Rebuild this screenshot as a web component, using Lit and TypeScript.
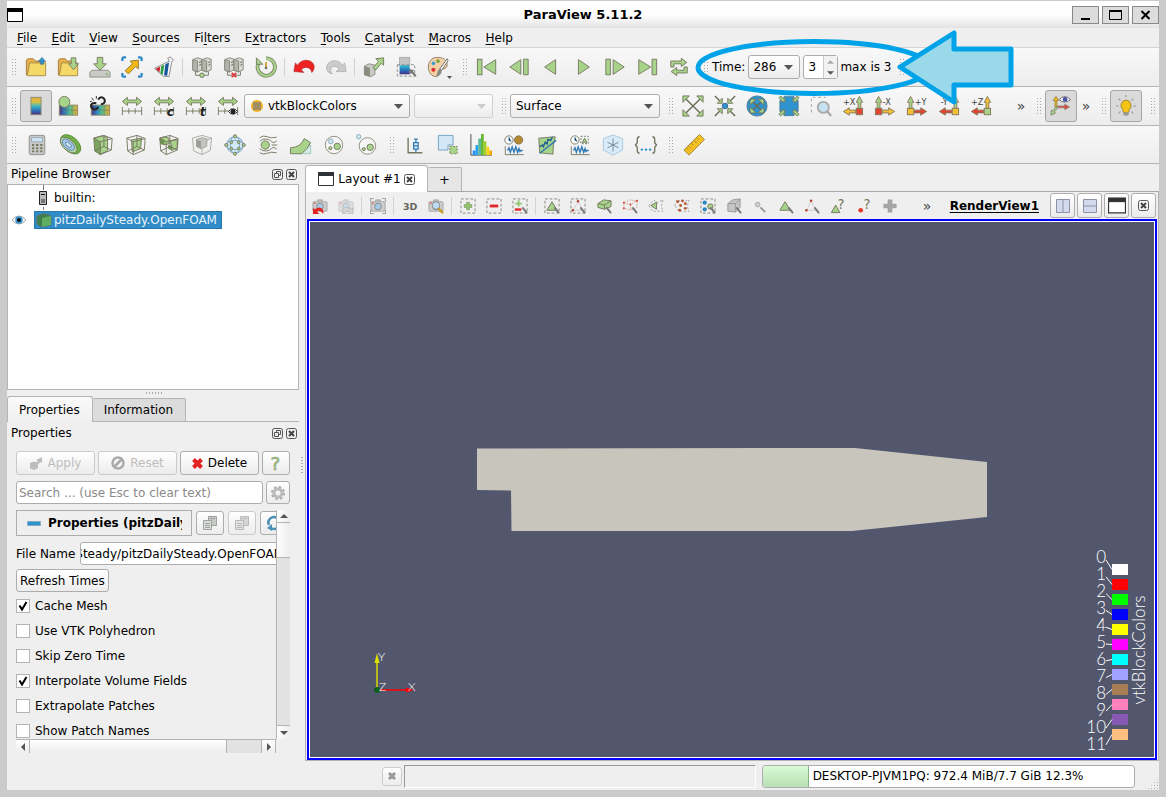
import { LitElement, html, svg, css } from "lit";
import { customElement, state } from "lit/decorators.js";

const cubeWire = svg`<path class="ol" d="M2 4.500 13 1.500 22 5 9 8.500ZM2 4.500 3 18.500 9 22.500 21 17.500 22 5M9 8.500V22.500M13 1.500V13.500L3 18.500M13 13.500 21 17.500"/>`;
const folder = svg`<path fill="#e9b04e" stroke="#a87a35" d="M1.500 21V4.500L3 3H9l2 2.500h9V9"/><path fill="#f4d968" stroke="#a58a45" d="M5 7.500H22.500V21.500H2.500Z"/>`;
const servers = svg`<g fill="#d8d8d2" stroke="#85857c"><path d="M2 4 7 2 12 3.500V15L7 17.500 2 15.500Z"/><path fill="#b5b4ac" d="M2 4 7 5.500V17.500L2 15.500Z"/><path d="M12 4 17 2 22 3.500V15L17 17.500 12 15.500Z"/><path fill="#b5b4ac" d="M12 4 17 5.500V17.500L12 15.500Z"/></g><path stroke="#555" d="M9 7l2-.7M9 10l2-.7M19 7l2-.7M19 10l2-.7"/><path class="ol" d="M5 17v4h5M19 17v4h-5"/>`;
const rangeArrow = svg`<path class="gr" d="M1.500 7 7 2.500V5.500H17V2.500L22.500 7 17 11.500V8.500H7V11.500Z"/><path class="ol" d="M1.500 13V22M22.500 13V22M1.500 17.500H22.500M8.500 14.500V20.500M15.500 14.500V20.500"/>`;
const camera = svg`<rect x="1" y="4" width="15" height="10" rx="1" fill="#cdcdcd" stroke="#a5a5a5"/><path fill="#bbb" stroke="#aaa" d="M6 4V2h5v2"/><circle cx="8.500" cy="9" r="3.500" fill="#a7cbe8" stroke="#888"/><path fill="#e33" d="M2 5h2v1H2z"/>`;
const dashBox = svg`<rect x="1" y="1" width="15" height="15" fill="none" stroke="#86877e" stroke-dasharray="3 2"/>`;
const pick = svg`<path stroke="#777" stroke-width="2" d="M11 10l5 6"/>`;
const gradient = svg`<linearGradient id="rb" x1="0" y1="0" x2="0" y2="1"><stop offset="0" stop-color="#eaa83a"/><stop offset=".28" stop-color="#d5c242"/><stop offset=".5" stop-color="#3fb8c0"/><stop offset=".75" stop-color="#2c74b8"/><stop offset="1" stop-color="#512a83"/></linearGradient><linearGradient id="rh"><stop offset="0" stop-color="#512a83"/><stop offset=".3" stop-color="#2b80c0"/><stop offset=".6" stop-color="#58bf8e"/><stop offset="1" stop-color="#f0a830"/></linearGradient><linearGradient id="rc" x1="0" y1="0" x2="0" y2="1"><stop offset="0" stop-color="#3fc0d0"/><stop offset=".5" stop-color="#2478c0"/><stop offset="1" stop-color="#45307f"/></linearGradient>`;
const viewArrows = (up: string, side: string, box: string, flip: boolean, label: string, mid = false) => svg`
  <g transform=${flip ? "translate(24 0) scale(-1 1)" : ""}>
    <path fill=${up} stroke="#85765a" d="M3.500 15V8H1.500L5 1.500 8.500 8H6.500V15Z"/>
    <path fill=${side} stroke="#85765a" d="M9 16.500H16V14L22.500 18 16 22V19.500H9Z"/>
    <rect x="1.500" y="14.500" width="7" height="7" fill=${box} stroke="#85765a"/>
  </g>
  <text x=${flip ? (mid ? 3 : 1) : 9.500} y="11" class="axis">${label}</text>`;
const thinOut = svg`<path stroke="#686b52" stroke-width="1.500" d="M4 4 20 20M20 4 4 20"/><g class="gr"><path d="M1 1H8L1 8ZM23 1V8L16 1ZM1 23V16L8 23ZM23 23H16L23 16Z"/></g>`;
const discOut = svg`<path stroke="#686b52" stroke-width="1.500" d="M7 7 17 17M17 7 7 17"/><g class="gr"><path d="M4.500 4.500H11L4.500 11ZM19.500 4.500V11L13 4.500ZM4.500 19.500V13L11 19.500ZM19.500 19.500H13L19.500 13Z"/></g>`;
const inArrows = svg`<path stroke="#686b52" stroke-width="1.500" d="M1 1 7 7M23 1 17 7M1 23 7 17M23 23 17 17"/><g class="gr"><path d="M9 3.500V9H3.500ZM15 3.500V9H20.500ZM9 20.500V15H3.500ZM15 20.500V15H20.500Z"/></g>`;
const wave = svg`<path stroke="#2e79b5" stroke-width="1.500" fill="none" d="M5 18l1.500-3 1.500 5 2-6 2 6 2-6 2 6 1.500-4 1 3 1-1h2"/><path class="ol" d="M2.500 13.500V22.500H22.500"/>`;
const clock = svg`<circle cx="6.500" cy="6.500" r="4.500" fill="#fff" stroke="#75775f"/><path stroke="#2e79b5" d="M6.500 3.500V7L9 8"/>`;

const icons: Record<string, unknown> = {
  open: svg`${folder}<path fill="#2f93cf" stroke="#35678c" stroke-width=".7" d="M17 9V6H14.500L18.500 1.500 22.500 6H20V9Z"/>`,
  load: svg`${folder}<path class="gr" d="M15.500 2H20.500V8.500H23.500L18 15 12.500 8.500H15.500Z"/>`,
  save: svg`<path class="gy" d="M3 15.500H21L23 18V23H1V18Z"/><circle cx="19.500" cy="20" r="1.200" fill="#7fb75a"/><path class="gr" d="M9 1.500H15V8.500H19L12 15.500 5 8.500H9Z"/>`,
  extract: svg`<g fill="none" stroke="#2f8ac6" stroke-width="2.500"><path d="M1.500 5.500V3Q1.500 1.500 3 1.500H5.500M18.500 1.500H21Q22.500 1.500 22.500 3V5.500M1.500 18.500V21Q1.500 22.500 3 22.500H5.500M18.500 22.500H21Q22.500 22.500 22.500 21V18.500"/></g><path fill="#f3b817" stroke="#8c7636" d="M19 4.500V14L16 11.500 8 19.500 4.500 16 12.500 8.500 10 5.500Z"/>`,
  catalyst: svg`<path fill="#f5f5f5" stroke="#888" d="M1.500 13.500 18 5.500 16 2.500 19 1 22.500 4.500 20.500 6 17.500 22.500 11 22Z"/><path fill="#cc2030" d="M3 14 8 11.500 7 18Z"/><path fill="#2b9c47" d="M9 11 12.500 9.500 10.500 20.500 8 19Z"/><path fill="#15559c" d="M13.500 9 17.500 7 15.500 21.500 12 21Z"/>`,
  connect: svg`${servers}<circle class="gr" cx="12" cy="21" r="2.500"/>`,
  disconnect: svg`${servers}<path stroke="#d83a3a" stroke-width="2" d="M9.500 18.500 14.500 23M14.500 18.500 9.500 23"/>`,
  history: svg`<path fill="none" stroke="#75775f" stroke-width="4" d="M4.500 6.500A9.500 9.500 0 1 0 12 2.500"/><path fill="none" stroke="#a7d38a" stroke-width="2.400" d="M4.500 6.500A9.500 9.500 0 1 0 12 2.500"/><path class="gr" d="M1.500 2V9H8.500Z"/><path stroke="#d6a02c" stroke-width="2" d="M12 6.500V14"/><circle cx="12" cy="13" r="1.500" fill="#777"/>`,
  undo: svg`<path fill="#ee2222" stroke="#a52525" stroke-width=".6" d="M1 17 2.500 7.500 5 10C9 3 19 3 22.500 9c1.500 4 0 7-2 9-.500-5-7-8-11.500-3L12 18Z"/>`,
  redo: svg`<path fill="#cbcbcb" stroke="#aaa" stroke-width=".8" d="M23 17 21.500 7.500 19 10C15 4 7 3.500 3 8.500c-3 5-1 10 5 11-4-5-1-10 5-7.500L15.500 14 12 17Z"/>`,
  loadstate: svg`<path class="gy" d="M1.500 11 7 8.500 13 10V20L8 22.500 1.500 20.500Z"/><path fill="#8b8b80" d="M1.500 11 7.500 13V22.500L1.500 20.500Z"/><path class="gr" d="M22.500 2V10L20 8 13.500 15.500 11 12.500 17 6 14 3Z"/>`,
  colorby: svg`${gradient}<rect x="5" y="1.500" width="11" height="9" fill="#c4c4c4" stroke="#aaa"/><rect x="5" y="10" width="11" height="10" fill="url(#rc)"/><rect x="2.500" y="9.500" width="19" height="12.500" fill="none" stroke="#888" stroke-dasharray="3 2"/><path fill="#777" d="M15 14 21 15.500 19.500 17 23.500 21 22 22.500 18 18.500 16.500 20Z"/>`,
  palette: svg`<path fill="#f3d1a4" stroke="#8e7d66" d="M11 1.500C5 1.500 1.500 6 1.500 12S5 22.500 10 22.500c4 0 1-5 3-7s9 0 9-6-5-8-11-8Z"/><circle cx="7" cy="8" r="2" fill="#3b9bd4"/><circle cx="12" cy="5.500" r="2" fill="#76a63c"/><circle cx="7" cy="15" r="2.200" fill="#e02e2e"/><path fill="#fff" stroke="#666" d="M22 3 14 14l2 1.500L23 5Z"/><path fill="#888" d="M14 14c-3 2-2 5-4 8 4 0 6-3 6-6Z"/>`,
  first: svg`<rect class="gr" x="1.500" y="3.500" width="5" height="17"/><path class="gr" d="M21.500 4V20L8.500 12Z"/>`,
  prev: svg`<path class="gr" d="M14 4V20L2 12ZM17 3.500h5V20.500H17Z"/>`,
  back: svg`<path class="gr" d="M17 4V20L5 12Z"/>`,
  play: svg`<path class="gr" d="M7 4V20L19 12Z"/>`,
  next: svg`<path class="gr" d="M2 3.500H7V20.500H2ZM10 4V20L22 12Z"/>`,
  last: svg`<path class="gr" d="M3 4V20L16 12ZM17.500 3.500h5V20.500H17.500Z"/>`,
  loop: svg`<path class="gr" d="M3 12V5.500H14.500V2.500L20.500 7 14.500 11.500V8.500H6.500V12ZM21 12V18.500H9.500V21.500L3.500 17 9.500 12.500V15.500H17.500V12Z"/>`,
  colorbar: svg`${gradient}<rect x="6.500" y="2.500" width="11" height="19" fill="url(#rb)" stroke="#8a8a7a"/>`,
  editmap: svg`${gradient}<rect x="2.500" y="11" width="20" height="11" fill="url(#rh)" stroke="#8a8a6a"/><path stroke="#6b6b4c" stroke-width=".5" d="M3 16.500H23M10 11V22M16.500 11V22"/><circle cx="8" cy="7.500" r="6" class="gr"/>`,
  sepmap: svg`${gradient}<rect x="2.500" y="11" width="20" height="11" fill="url(#rh)" stroke="#8a8a6a"/><path stroke="#6b6b4c" stroke-width=".5" d="M3 16.500H23M16.500 11V22"/><g fill="none" stroke="#222" stroke-width="2.200"><path d="M10 5c2-4 6-3 7 0s-1 5-4 5M8 9c-5-1-7 2-5 5s6 2 7-1"/></g><path stroke="#222" d="M3 3l2 3M8 1v3M1 7h2"/>`,
  range: rangeArrow,
  rangec: svg`${rangeArrow}<text x="15" y="22.500" class="glyph">c</text>`,
  ranget: svg`${rangeArrow}<text x="16" y="22.500" class="glyph">t</text>`,
  rangeeye: svg`${rangeArrow}<path fill="#fff" stroke="#222" d="M12.500 18q5-6 10 0-5 6-10 0Z"/><circle cx="17.500" cy="18" r="2.800" fill="#222"/>`,
  resetview: thinOut,
  zoomcenter: svg`${inArrows}<circle cx="12" cy="12" r="3" fill="#2e93cf" stroke="#35678c"/>`,
  zoomdata: svg`<circle cx="12" cy="12" r="11" fill="#2e93cf" stroke="#4b7690"/>${discOut}`,
  zoomclose: svg`<path fill="#2e93cf" stroke="#4b7690" stroke-width=".8" d="M6.500 1.500H17.500Q17 5.500 22 6V18Q17.500 18.500 17.500 22.500H6.500Q6.500 18.500 2 18V6Q6.500 5.500 6.500 1.500Z"/><g class="gr"><path d="M7.500 3V7.500H3L4.200 6 1 3 3 1 6 4.200ZM16.500 3V7.500H21L19.800 6 23 3 21 1 18 4.200ZM7.500 21V16.500H3L4.200 18 1 21 3 23 6 19.800ZM16.500 21V16.500H21L19.800 18 23 21 21 23 18 19.800Z"/></g>`,
  zoombox: svg`<path fill="none" stroke="#999" stroke-dasharray="3 3" d="M1.500 19V2.500H17"/><circle cx="14.500" cy="13.500" r="6" fill="#c6e2f3" stroke="#aaa" stroke-width="2"/><path stroke="#aaa" stroke-width="2.500" d="M19 18l4 5"/>`,
  px: viewArrows("#a7d38a", "#f3c033", "#e24432", true, "+X"),
  mx: viewArrows("#a7d38a", "#f3c033", "#e24432", false, "-X"),
  py: viewArrows("#a7d38a", "#e24432", "#f3c033", false, "+Y"),
  my: viewArrows("#a7d38a", "#e24432", "#f3c033", true, "-Y", true),
  pz: viewArrows("#f3c033", "#e24432", "#a7d38a", true, "+Z"),
  axes: svg`<path fill="#f3b817" stroke="#8c7636" stroke-width=".8" d="M5.500 13V6H3.500L6.500 1.500 9.500 6H7.500V13Z"/><path fill="#e24432" stroke="#888" stroke-width=".8" d="M8 12H16V10L21.500 13 16 16V14H8Z"/><path class="gr" stroke-width=".8" d="M6.500 12.500 3 17.500 1.500 16.500 1 22 6 19.500 4.500 18.500 8.500 14Z"/><path fill="#fff" stroke="#666" d="M10 5q6-6.500 12.500 0-6.500 5.500-12.500 0Z"/><circle cx="16.500" cy="4.800" r="2.600" fill="#4a53a5"/>`,
  light: svg`<g stroke="#999" stroke-width="1.200"><path d="M12 0V2.500M1 12H4M20 12h3M4 4l2 2M20 4l-2 2M4 20l2-2M20 20l-2-2"/></g><path fill="#f3c316" stroke="#9b8436" d="M12 5.500a6 6 0 0 0-3.500 10.500l.500 3h6l.500-3A6 6 0 0 0 12 5.500Z"/><path fill="#999" d="M9 19h6v2l-1.500 1.500h-3L9 21Z"/>`,
  calc: svg`<rect x="3.500" y="1.500" width="17" height="21" rx="2" fill="#c9c9c9" stroke="#8b8b86"/><rect x="6" y="4" width="12" height="4.500" fill="#cfe4f3" stroke="#9ab"/><g fill="#77775f"><path d="M6.500 11h2.500v2h-2.500zM11 11h2.500v2h-2.500zM15.500 11h2.500v2h-2.500zM6.500 14.500h2.500v2h-2.500zM11 14.500h2.500v2h-2.500zM15.500 14.500h2.500v2h-2.500zM6.500 18h2.500v2h-2.500zM11 18h2.500v2h-2.500zM15.500 18h2.500v2h-2.500z"/></g>`,
  contour: svg`<g transform="rotate(42 12 12)"><ellipse cx="12" cy="11" rx="13" ry="8" fill="#6fb244" stroke="#5a8a3d"/><ellipse cx="11" cy="13" rx="11" ry="6" fill="#b7dba0" stroke="#75775f"/><ellipse cx="10.500" cy="13" rx="8" ry="4.300" fill="#a4c9e8" stroke="#5d84a5"/><ellipse cx="10.500" cy="13" rx="4" ry="2" fill="#cfe4f3" stroke="#5d84a5"/></g>`,
  clip: svg`<path class="gr" d="M2 4.500 11 2 17 4V18.500L9 22Z"/><path fill="#7da35f" d="M2 4.500 9 8.500V22.500L3 18.500Z"/>${cubeWire}`,
  slice: svg`<path class="gr" d="M7 6.500 18 4.500 17 16 8 19.500Z"/>${cubeWire}`,
  threshold: svg`<path class="gr" d="M2 4.500 7 3 12 4.500V10.500L8 12 3 10.500ZM13 8 21 6V15L15 18V13Z"/><path fill="#6a9650" d="M2 4.500 7 6.500V12L3 10.500ZM11 12l4 1v5l-4-2Z"/>${cubeWire}`,
  subset: svg`<path fill="#efefef" stroke="#a8a8a4" d="M1.500 4.500 12 1.500 22.500 4.500 21 18 12 22.500 3 18.500Z"/><path fill="#c4c4c0" stroke="#a0a09b" d="M6 6 12 4 17.500 5.500 17 13.500 11 16 6 13.500Z"/><path fill="#9c9c98" d="M6 6 11 8V16L6 13.500Z"/><path fill="none" stroke="#a8a8a4" d="M12 16V22.500M22.500 4.500 17 7"/>`,
  glyph: svg`<circle cx="12" cy="12" r="9" fill="#d3e8f6" stroke="#6f9fbe"/><path fill="none" stroke="#7ba5c0" d="M3.500 9Q12 5 20.500 9M3.500 15Q12 19 20.500 15M9 3.500Q5 12 9 20.500M15 3.500Q19 12 15 20.500"/><g class="gr"><circle cx="12" cy="2.500" r="1.700"/><circle cx="12" cy="21.500" r="1.700"/><circle cx="2.500" cy="12" r="1.700"/><circle cx="21.500" cy="12" r="1.700"/><circle cx="8" cy="9" r="1.500"/><circle cx="16" cy="9" r="1.500"/><circle cx="8" cy="16" r="1.500"/><circle cx="16" cy="16" r="1.500"/></g>`,
  stream: svg`<path class="ol" d="M3 4Q7 1 11 3T21.500 3.500M3 8Q6 5 10 5.500T16 8.500 21.500 7.500M16 12H22M3 16Q6 19 10 18.500T16 15.500 21.500 16.500M3 20.500Q7 23 11 21T21.500 20.500"/><circle class="gr" cx="9" cy="12" r="4.500"/>`,
  warp: svg`<path fill="#d3ece8" stroke="#9fc5be" d="M9 21.500 22.500 12V21.500Z"/><path class="gr" d="M.5 15Q12 14.500 15.500 5L22.500 9.500Q19 17 12.500 21.500H.5Z"/>`,
  group: svg`<circle cx="12" cy="12" r="9.500" fill="#f6f6f6" stroke="#8a8b78"/><circle cx="8.500" cy="8" r="2.600" fill="#cfe8ec" stroke="#8ab"/><circle class="gr" cx="15.500" cy="13.500" r="3.500"/><circle class="gr" cx="8" cy="15.500" r="1.700"/>`,
  extractgroup: svg`<circle cx="12.500" cy="13" r="9" fill="#f6f6f6" stroke="#8a8b78"/><circle cx="3" cy="3" r="2.400" fill="#cfe8ec" stroke="#8ab"/><circle class="gr" cx="15.500" cy="14.500" r="3.500"/><circle class="gr" cx="8.500" cy="16.500" r="1.700"/>`,
  box: svg`<path class="ol" stroke-width="1.500" d="M4.500 4V20.500H20"/><path stroke="#2e79b5" stroke-width="1.300" fill="#dcebf6" d="M10.500 9.500h5v7h-5zM13 5.500v4M13 16.500v3M11 5.500h4M10.500 13h5"/>`,
  selectdata: svg`<path fill="#d3e8f6" stroke="#6f9fbe" d="M1.500 1.500H17.500V12H12V17.500H1.500Z"/><rect x="14" y="13.500" width="8" height="8" fill="#a7d38a" stroke="#75775f" stroke-dasharray="2 1.500"/>`,
  histogram: svg`<path stroke="#444" fill="none" d="M1 0V23H24"/><path fill="#1e8fff" d="M3 18h3v5H3z"/><path fill="#2aa3f0" d="M6 12h3v11H6z"/><path fill="#58b8a0" d="M9 5h3v18H9z"/><path fill="#66b82c" d="M12 0h3v23h-3z"/><path fill="#a4cc30" d="M15 8h3v15h-3z"/><path fill="#f6d50e" d="M18 14h3v9h-3z"/><path fill="#f9a812" d="M21 18h3v5h-3z"/>`,
  plottime: svg`${clock}<circle cx="17" cy="6.500" r="4.500" fill="#b4892f" stroke="#81754e"/>${wave}`,
  plotline: svg`<path class="gr" d="M3 4.500 21 3 19 12 18.500 22 4 20.500Z"/><path stroke="#2e79b5" stroke-width="1.500" d="M4 21 22 7"/><path stroke="#1f5d90" fill="none" stroke-width="1.500" d="M4 14l3-2 1 2 2-5 2 2 1-5 3 1 2-4"/>`,
  plotsel: svg`${clock}<rect x="13" y="2.500" width="8" height="8" fill="none" stroke="#75775f" stroke-dasharray="2 1.500"/><path class="gr" d="M17 4.500 19.500 9H14.500Z"/>${wave}`,
  probe: svg`<path fill="#d9ebf8" stroke="#a9c6db" d="M12 1 22.500 5V17.500L12 23 1.500 17.500V5Z"/><path stroke="#6d8494" d="M12 5V19M6 9 18 15M18 9 6 15"/>`,
  programmable: svg`<g fill="none" stroke="#75775f" stroke-width="1.500"><path d="M5 3Q2.500 3 2.500 6V9.500L.5 12l2 2.500V18q0 3 2.500 3M19 3q2.500 0 2.500 3V9.500l2 2.500-2 2.500V18q0 3-2.500 3"/></g><g fill="#2e8fc7"><circle cx="7.500" cy="17" r="1.300"/><circle cx="12" cy="17" r="1.300"/><circle cx="16.500" cy="17" r="1.300"/></g>`,
  ruler: svg`<path fill="#f4c022" stroke="#a08234" d="M18 .5 23.500 6 6.500 23 1 17.500Z"/><path stroke="#a08234" d="M15 4l2 2M12 7l3 3M9 10l2 2M6 13l3 3M4 15.500l2 2"/>`,
  help: svg`<text x="6" y="20" font-size="20" fill="#a7d38a" stroke="#8a9a74" stroke-width=".7">?</text>`,
};

const viewIcons: Record<string, unknown> = {
  camundo: svg`${camera}<path fill="#e32222" d="M1 17V10.500L3 12Q9 8 12 13v4Q8 12 5.500 14.500L8 17Z"/>`,
  camredo: svg`<g opacity=".5">${camera}</g><path fill="#d5d5d5" stroke="#aaa" stroke-width=".6" d="M16 17V10.500L14 12Q8 8 5 12v5h3Q7 13 12 14.500L10 17Z"/>`,
  capture: svg`${camera}<path fill="none" stroke="#999" d="M.5 4V.5H4M13 .5h3.500V4M.5 13v3.500H4M13 16.500h3.500V13"/>`,
  threed: svg`<text x="1" y="13" font-size="10" font-weight="700" fill="#66665a">3D</text>`,
  camzoom: svg`${camera}<circle cx="8.500" cy="8" r="4" fill="#bedcf2" stroke="#888"/><path stroke="#c79a28" stroke-width="2.500" d="M11 11l5 5"/>`,
  add: svg`${dashBox}<path fill="#93c66e" stroke="#6c8b52" stroke-width=".6" d="M7 4.500h3V7h2.500v3H10v2.500H7V10H4.500V7H7Z"/>`,
  sub: svg`${dashBox}<path fill="#e02626" d="M4 7h9v3H4z"/>`,
  toggle: svg`${dashBox}<path fill="#93c66e" d="M6 2.500h2V5h2.500v2H8v2H6V7H3.500V5H6Z"/><path fill="#e02626" d="M3 11h7v2.500H3z"/>${pick}`,
  cells: svg`${dashBox}<path class="gr" d="M8.500 4 14 13H3Z"/>${pick}`,
  points: svg`${dashBox}<path fill="none" stroke="#ccc" d="M8.500 4 14 13H3Z"/><g fill="#b5432e"><circle cx="8.500" cy="3.500" r="1.300"/><circle cx="3" cy="13" r="1.300"/></g>${pick}`,
  frcells: svg`<path class="gr" d="M2 6 8 2 16 3V9L9 12 2 10Z"/><path class="ol" d="M2 6 9 7.500 16 3M9 7.500V12"/>${pick}`,
  frpoints: svg`<path fill="none" stroke="#d8a59c" stroke-dasharray="2 1" d="M2 5 8 2 16 3V10L9 13 2 11ZM2 5 9 7 16 3M9 7v6"/><g fill="#cf4a3a"><circle cx="2" cy="5" r="1.100"/><circle cx="9" cy="7" r="1.100"/><circle cx="16" cy="3" r="1.100"/><circle cx="2" cy="11" r="1.100"/></g>${pick}`,
  polycells: svg`<path fill="none" stroke="#999" stroke-dasharray="2 2" d="M1 8 6 2 10 5 16 2 14 9 16 14H5Z"/><path class="gr" d="M9 4.500V12L3 8Z"/>`,
  polypoints: svg`<path fill="none" stroke="#999" stroke-dasharray="2 2" d="M1 8 3 2 10 4 16 2 14 9 16 14H5Z"/><g fill="#b5532e"><circle cx="4" cy="4" r="1.500"/><circle cx="9" cy="3" r="1.500"/><circle cx="7" cy="8" r="1.500"/><circle cx="12" cy="6" r="1.500"/><circle cx="12" cy="11" r="1.500"/><circle cx="6" cy="13" r="1.500"/></g>`,
  blocks: svg`${dashBox}<circle cx="5" cy="5" r="2.300" fill="#2e86c1"/><circle cx="5" cy="12" r="2.300" fill="#2e86c1"/><circle class="gr" cx="11" cy="9" r="2.800"/>${pick}`,
  frblocks: svg`<path fill="#c6c6c6" stroke="#999" d="M2 6 7 2 15 1V10L10 15 2 14Z"/><path fill="none" stroke="#999" d="M2 6H10L15 1M10 6V15"/>${pick}`,
  hover: svg`<circle cx="6" cy="7" r="2.500" fill="#ccc" stroke="#aaa"/><path stroke="#999" stroke-width="2" d="M9 10l5 5"/>`,
  icells: svg`<path class="gr" d="M7.500 4 13 13H2Z"/>${pick}`,
  ipoints: svg`<path fill="none" stroke="#ccc" d="M7.500 3 13 13H3Z"/><g fill="#b5432e"><circle cx="7.500" cy="3" r="1.400"/><circle cx="2.500" cy="13" r="1.400"/></g>${pick}`,
  hcells: svg`<path class="gr" d="M6 7.500 10.500 15.500H1.500Z"/><text x="8" y="12" class="q">?</text>`,
  hpoints: svg`<circle cx="5" cy="13" r="2.500" fill="#e23a26"/><text x="8" y="12" class="q">?</text>`,
  grow: svg`<path fill="#a4a4a4" d="M6 1.500h5V6h4.500v5H11v4.500H6V11H1.500V6H6Z"/>`,
};

const icon = (name: string) => html`<svg class="icon" viewBox="0 0 24 24" aria-hidden="true">${icons[name]}</svg>`;
const viewIcon = (name: string) => html`<svg class="vicon" viewBox="0 0 17 17" aria-hidden="true">${viewIcons[name]}</svg>`;
const caret = html`<svg class="caret" viewBox="0 0 9 5" aria-hidden="true"><path fill="currentColor" d="M0 0h9L4.500 5Z"/></svg>`;
const windowIcon = html`<svg class="win" viewBox="0 0 16 14" aria-hidden="true"><path fill="#fff" stroke="currentColor" d="M.5.5h15v13H.5z"/><path fill="currentColor" d="M0 0h16v4H0z"/></svg>`;
const closeBox = html`<svg class="mini" viewBox="0 0 11 11" aria-hidden="true"><rect x=".5" y=".5" width="10" height="10" rx="2" fill="none" stroke="#555"/><path stroke="#444" stroke-width="2" d="M3 3l5 5M8 3 3 8"/></svg>`;
const floatBox = html`<svg class="mini" viewBox="0 0 11 11" aria-hidden="true"><rect x=".5" y=".5" width="10" height="10" rx="2" fill="none" stroke="#555"/><path fill="none" stroke="#555" d="M4.500 4.500V2.500h4v4h-2M2.500 4.500h4v4h-4z"/></svg>`;

const menus: [string, number][] = [["File", 0], ["Edit", 0], ["View", 0], ["Sources", 0], ["Filters", 2], ["Extractors", 1], ["Tools", 0], ["Catalyst", 0], ["Macros", 0], ["Help", 0]];

const blocks = ["#ffffff", "#ff0000", "#00ff00", "#0000ff", "#ffff00", "#ff00ff", "#00ffff", "#a1a1ff", "#a97d53", "#ff80bc", "#8759b5", "#ffbf80"];

@customElement("app-root")
export class AppRoot extends LitElement {
  @state() private options = [
    { id: "cache", label: "Cache Mesh", on: true },
    { id: "poly", label: "Use VTK Polyhedron", on: false },
    { id: "skip", label: "Skip Zero Time", on: false },
    { id: "interp", label: "Interpolate Volume Fields", on: true },
    { id: "extrap", label: "Extrapolate Patches", on: false },
    { id: "names", label: "Show Patch Names", on: false },
  ];

  static styles = css`
    :host { display: block; font: 12px/16px "DejaVu Sans", sans-serif; color: #000; }
    * { box-sizing: border-box; }
    button, input, select { font: inherit; color: inherit; margin: 0; padding: 0; }
    button { background: none; border: 0; display: flex; align-items: center; justify-content: center; white-space: nowrap; }
    svg { display: block; flex: none; }
    .window { position: relative; min-height: 100vh; display: grid; grid-template-rows: 28px 20px 39px 39px 38px 1fr 28px; border: solid #cbcbcb; border-width: 0 7px 7px; background: #efefef; overflow: hidden; }
    .titlebar { margin: 0 -7px; padding: 0 7px; display: grid; grid-template-columns: 1fr auto 1fr; align-items: center; background: linear-gradient(#fff 50%, #e3e3e3); border-top: 1px solid #ccc; border-radius: 5px 5px 0 0; }
    .title { font-size: 13px; font-weight: 700; }
    .win { width: 16px; height: 14px; }
    .winbuttons { display: flex; gap: 3px; justify-content: flex-end; }
    .winbuttons button { width: 27px; height: 18px; background: #dcdcdc; border: 1px solid #888; }
    .menubar { padding: 0 3px; border-bottom: 1px solid #d4d4d4; }
    .menus { display: flex; max-width: 510px; justify-content: space-between; }
    .menubar button { padding: 0 7px; height: 19px; }
    u { text-underline-offset: 2px; }
    .toolbar { display: flex; align-items: center; border-bottom: 1px solid #b4b4b4; background: linear-gradient(#f8f8f8, #ededed); white-space: nowrap; min-width: 0; }
    .handle { width: 5px; height: 18px; margin: 0 4px; flex: none; background: radial-gradient(circle, #aaa 0.7px, transparent 1px) 0 0 / 3px 3px; }
    .tool { width: 32px; height: 32px; flex: none; }
    .wide .tool { width: 33px; }
    .icon { width: 22px; height: 22px; overflow: visible; }
    .on { background: #dadada; border: 1px solid #a6a6a6; border-radius: 3px; }
    .sep { width: 1px; height: 18px; margin: 0 3px 0 2px; background: #d2d2d2; flex: none; }
    .more { width: 18px; font-size: 14px; color: #444; flex: none; }
    .gr { fill: #a7d38a; stroke: #75775f; }
    .ol { fill: none; stroke: #75775f; }
    .gy { fill: #c9c9c6; stroke: #8c8c86; }
    .glyph { font: italic 700 13px "DejaVu Sans", sans-serif; fill: #222; }
    .axis { font-size: 9px; fill: #444; }
    .q { font-size: 14px; fill: #75775f; }
    .combo { display: flex; align-items: center; height: 24px; padding: 0 6px 0 5px; border: 1px solid #adadad; border-radius: 3px; background: linear-gradient(#fff, #ececec); flex: none; }
    .combo select { appearance: none; background: none; border: 0; outline: 0; flex: 1; min-width: 0; height: 22px; }
    .combo .dot { width: 12px; height: 12px; margin: 0 5px 0 2px; }
    .caret { width: 9px; height: 5px; color: #555; }
    .faded { border-color: #cfcfcf; color: #ccc; }
    .faded .caret { color: #ccc; }
    .w-array { width: 166px; } .w-comp { width: 79px; margin: 0 4px; } .w-rep { width: 150px; } .w-time { width: 52px; margin: 0 3px; }
    .w-time, .w-array { padding-left: 4px; }
    .spin { display: flex; width: 35px; height: 24px; border: 1px solid #adadad; border-radius: 3px; background: #fff; margin-right: 2px; }
    .spin input { appearance: textfield; border: 0; outline: 0; width: 19px; padding-left: 4px; background: none; }
    .spin input::-webkit-inner-spin-button { display: none; }
    .steps { flex: 1; display: grid; border-left: 1px solid #ccc; background: #f2f2f2; }
    .steps svg { width: 7px; height: 4px; }
    .palette { position: relative; }
    .palette .caret { position: absolute; right: 2px; bottom: 4px; width: 5px; height: 3px; }
    .gap-m { width: 4px; flex: none; }
    .gap-s { width: 2px; flex: none; }
    .body { display: grid; grid-template-columns: 292px 6px minmax(0, 1fr); min-height: 0; }
    .dock { display: grid; grid-template-rows: 20px 206px 6px 26px 22px minmax(0, 1fr); min-width: 0; }
    .docktitle { display: flex; align-items: center; gap: 3px; padding: 0 2px 0 4px; }
    .docktitle span { flex: 1; }
    .mini { width: 11px; height: 11px; }
    .tree { margin: 0; padding: 0; list-style: none; background: #fff; border: 1px solid #b4b4b4; }
    .tree li { display: flex; align-items: center; height: 22px; }
    .tree .server { height: 25px; padding-left: 30px; gap: 4px; }
    .tree .source { padding-left: 3px; height: 20px; gap: 7px; }
    .picked { display: flex; align-items: center; gap: 2px; height: 18px; padding: 0 4px 0 1px; background: #308cc6; border: 1px solid #2878ad; color: #eaf3fa; }
    .split { display: grid; place-items: center; }
    .split i { width: 17px; height: 2px; background: radial-gradient(circle, #aaa 0.7px, transparent 1px) 0 0 / 3px 2px; }
    .vsplit { display: grid; align-content: start; justify-items: center; padding-top: 292px; }
    .vsplit i { width: 2px; height: 17px; background: radial-gradient(circle, #aaa 0.7px, transparent 1px) 0 0 / 2px 3px; }
    .tabs { display: flex; align-items: flex-end; border-bottom: 1px solid #b4b4b4; }
    .tabs button { border: 1px solid #b4b4b4; border-bottom: 0; height: 23px; background: #dcdcdc; padding: 0 12px 0 11px; border-radius: 2px 2px 0 0; border-left: 0; }
    .tabs .current { height: 26px; background: linear-gradient(#fafafa, #efefef); border-left: 1px solid #b4b4b4; margin-bottom: -1px; border-radius: 3px 3px 0 0; }
    .props { display: grid; grid-template-rows: 24px 23px minmax(0, 1fr); gap: 6px; padding: 7px 9px 8px; min-height: 0; }
    .row { display: flex; gap: 3px; }
    .push { border: 1px solid #adadad; border-radius: 3px; background: linear-gradient(#fff, #ececec); gap: 5px; }
    .push:disabled { border-color: #cacaca; color: #bebebe; }
    .row .push { flex: 1 1 0; }
    .row .square { flex: 0 0 28px; }
    .row .gear { flex: 0 0 24px; }
    .field { border: 1px solid #adadad; border-radius: 3px; background: #fff; outline: 0; height: 23px; }
    .search { flex: 1; min-width: 0; padding: 0 2px; }
    .search::placeholder { color: #8a8a8a; }
    .scroll { display: grid; grid-template-columns: minmax(0, 1fr) 14px; grid-template-rows: minmax(0, 1fr) 14px; min-height: 0; height: 243px; }
    .content { overflow: hidden; min-width: 0; }
    .inner { width: 340px; }
    .grouprow { display: flex; gap: 4px; align-items: center; margin-bottom: 6px; }
    .group { width: 176px; height: 26px; border: 1px solid #adadad; display: flex; align-items: center; padding: 0 9px 0 10px; gap: 7px; margin: 0; font-size: 12px; }
    .group span { overflow: hidden; white-space: nowrap; font-weight: 700; }
    .grouprow .push { width: 28px; height: 24px; }
    .filerow { display: flex; align-items: center; gap: 5px; margin-bottom: 4px; }
    .file { width: 255px; text-indent: -6px; }
    .refresh { height: 23px; padding: 0 3px; margin-bottom: 1px; }
    .check { display: flex; align-items: center; gap: 5px; height: 25px; }
    .check input { appearance: none; width: 14px; height: 14px; border: 1px solid #b4b4b4; background: #fff; }
    .check input:checked { background: #fff url("data:image/svg+xml,%3Csvg xmlns='http://www.w3.org/2000/svg' viewBox='0 0 12 12'%3E%3Cpath d='M2.500 5.500 5 9.500 9.500 2' fill='none' stroke='black' stroke-width='2'/%3E%3C/svg%3E"); }
    .vbar { display: grid; grid-template-rows: 13px 35px 1fr 14px; border-left: 1px solid #b4b4b4; background: #e2e2e2; }
    .hbar { display: grid; grid-template-columns: 14px 1fr 34px 14px; border-top: 1px solid #b4b4b4; border-right: 1px solid #b4b4b4; background: #e2e2e2; }
    .vbar > *, .hbar > * { display: grid; place-items: center; color: #555; }
    .vbar .thumb, .vbar button { background: linear-gradient(90deg, #fff, #ececec); border-bottom: 1px solid #b4b4b4; }
    .vbar .down { border-bottom: 0; border-top: 1px solid #b4b4b4; }
    .hbar .thumb, .hbar button { background: linear-gradient(#fff, #ececec); border-right: 1px solid #b4b4b4; }
    .hbar .right { border-right: 0; border-left: 1px solid #b4b4b4; }
    .tri { width: 8px; height: 8px; }
    .main { display: grid; grid-template-rows: 28px minmax(0, 1fr); padding-bottom: 1px; min-width: 0; }
    .main .tabs { border-color: #a8a8a8; }
    .main .current { height: 27px; width: 123px; padding: 0; gap: 3px; background: #fff; }
    .main .current .win { margin: 0 1px 0 0; color: #2f3237; }
    .main .plus { width: 34px; height: 24px; padding: 0; font-size: 13px; background: #e6e6e6; }
    .frame { display: grid; grid-template-rows: 27px minmax(0, 1fr); border: 1px solid #b4b4b4; border-top: 0; padding: 0 1px; min-height: 0; }
    .viewbar { display: flex; align-items: center; min-width: 0; }
    .viewbar .tool { width: 26px; height: 24px; }
    .vicon { width: 16px; height: 16px; }
    .viewbar .more { width: 18px; margin-left: 15px; }
    .spacer { flex: 1; }
    .viewname { font-weight: 700; margin-right: 11px; color: #000; text-decoration: underline; text-underline-offset: 2px; }
    .viewbuttons { display: flex; gap: 2px; padding-right: 1px; }
    .viewbuttons .push { width: 25px; height: 25px; }
    .viewbuttons .win { width: 18px; height: 17px; color: #333; }
    .canvas { border: 2px solid #0000ff; min-height: 0; display: grid; }
    .canvas svg { width: 100%; height: 100%; border: 1px solid #fff; background: #52576e; min-height: 0; }
    .legend { font-family: Lato, sans-serif; font-weight: 300; font-size: 17px; fill: #fff; }
    .axislabel { font: 300 12px Lato, sans-serif; fill: #fff; }
    .status { display: grid; grid-template-columns: 375px 22px minmax(0, 1fr) 6px 373px 24px; align-items: center; }
    .cancel { width: 20px; height: 19px; grid-column: 2; justify-self: start; }
    .progress { height: 23px; border: 1px solid #fff; border-top-color: #999; border-left-color: #999; }
    .memory { grid-column: 5; height: 23px; border: 1px solid #adadad; border-radius: 3px; background: #fff; display: flex; align-items: center; gap: 4px; overflow: hidden; }
    .used { align-self: stretch; width: 12.3%; background: linear-gradient(#d9fad5, #b9dfb4); border-right: 1px solid #8ab086; }
    .grip { justify-self: end; align-self: end; width: 12px; height: 12px; background: radial-gradient(circle, #aaa 0.7px, transparent 1px) 0 0 / 3px 3px; clip-path: polygon(100% 0, 100% 100%, 0 100%); }
    .note { position: absolute; left: 683px; top: 24px; width: 330px; height: 84px; pointer-events: none; }
  `;

  private tools(names: string[], on: string[] = []) {
    return names.map((n) => (n === "|" ? html`<span class="sep"></span>` : html`<button class="tool ${on.includes(n) ? "on" : ""}" aria-label=${n}>${icon(n)}</button>`));
  }

  private toggle(id: string) {
    this.options = this.options.map((o) => (o.id === id ? { ...o, on: !o.on } : o));
  }

  private dockTitle(text: string) {
    return html`<div class="docktitle"><span>${text}</span><button aria-label="Float">${floatBox}</button><button aria-label="Close">${closeBox}</button></div>`;
  }

  private dock() {
    const page = svg`<path fill="#c8cbc8" stroke="#9da19d" d="M6.500 1.500h8v9h-8z"/><path fill="#dcdedc" stroke="#9da19d" d="M1.500 5.500h8v9h-8z"/><path stroke="#9da19d" d="M3 8.500h5M3 10.500h5M3 12.500h5M8 3.500h5"/>`;
    return html`
      <section class="dock">
        ${this.dockTitle("Pipeline Browser")}
        <ul class="tree">
          <li class="server"><svg width="12" height="25" viewBox="0 0 12 25"><path stroke="#777" d="M5.500 0v5M5.500 22v3"/><path fill="#bbb" stroke="#222" d="M1.500 6.500h7v13h-7z"/><path stroke="#111" d="M3 9.500h4"/><path fill="#777" d="M3 14h4v4H3z"/></svg>builtin:</li>
          <li class="source">
            <svg width="16" height="12" viewBox="0 0 16 12"><path fill="#fff" stroke="#a5a5a5" d="M1 6q7-8 14 0-7 8-14 0Z"/><circle cx="8" cy="6" r="3.800" fill="#3e96d0"/><circle cx="8" cy="6" r="2" fill="#111"/></svg>
            <span class="picked"><svg width="16" height="16" viewBox="0 0 16 16"><path fill="#3f7f4a" stroke="#5d7068" d="M1 4 8 1.500 15 4V13L6 15 1 12Z"/><path fill="#5fae62" d="M6 6 15 4V13L6 15Z"/></svg>pitzDailySteady.OpenFOAM</span>
          </li>
        </ul>
        <div class="split"><i></i></div>
        <div class="tabs" role="tablist"><button class="current" role="tab">Properties</button><button role="tab">Information</button></div>
        ${this.dockTitle("Properties")}
        <div class="props">
          <div class="row">
            <button class="push" disabled><svg width="13" height="13" viewBox="0 0 13 13"><path fill="#bdbdbd" d="M0 6 4 4.500 8 6V11L4 13 0 11.500ZM6 3 12 0V6L10.500 5 8 7.500 6.500 5.500 8 4Z"/></svg>Apply</button>
            <button class="push" disabled><svg width="14" height="14" viewBox="0 0 14 14"><circle cx="7" cy="7" r="5.500" fill="none" stroke="#aaa" stroke-width="2.500"/><path stroke="#aaa" stroke-width="2.500" d="M11 3 3 11"/></svg>Reset</button>
            <button class="push"><svg width="11" height="11" viewBox="0 0 11 11"><path stroke="#e32222" stroke-width="4" d="M1.500 1.500l8 8M9.500 1.500l-8 8"/></svg>Delete</button>
            <button class="push square" aria-label="Help">${icon("help")}</button>
          </div>
          <div class="row">
            <input class="field search" aria-label="Search" placeholder="Search ... (use Esc to clear text)" />
            <button class="push gear" aria-label="Advanced"><svg width="16" height="16" viewBox="0 0 16 16"><circle cx="8" cy="8" r="5.500" fill="none" stroke="#aaa" stroke-width="3" stroke-dasharray="2.300 2.020"/><circle cx="8" cy="8" r="4" fill="none" stroke="#bbb" stroke-width="3"/></svg></button>
          </div>
          <div class="scroll">
            <div class="content"><div class="inner">
              <div class="grouprow">
                <h2 class="group"><svg width="14" height="5" viewBox="0 0 14 5"><path fill="#2f93cf" stroke="#88aac0" d="M.5.5h13v4H.5z"/></svg><span>Properties (pitzDailySteady.OpenFOAM)</span></h2>
                <button class="push" aria-label="Copy"><svg width="16" height="16" viewBox="0 0 16 16">${page}</svg></button>
                <button class="push" aria-label="Paste" disabled><svg width="16" height="16" viewBox="0 0 16 16" opacity=".7">${page}</svg></button>
                <button class="push" aria-label="Reload"><svg width="16" height="16" viewBox="0 0 16 16"><path fill="none" stroke="#4a8fb5" stroke-width="2.500" d="M3 10a5.500 5.500 0 0 1 8-7M13 6a5.500 5.500 0 0 1-8 7"/><path fill="#4a8fb5" d="M10 0l5 3-5 4ZM6 9l-5 4 5 3Z"/></svg></button>
              </div>
              <div class="filerow"><label for="file">File Name</label><input id="file" class="field file" value="Steady/pitzDailySteady.OpenFOAM" /></div>
              <button class="push refresh">Refresh Times</button>
              ${this.options.map((o) => html`<label class="check"><input type="checkbox" .checked=${o.on} @change=${() => this.toggle(o.id)} />${o.label}</label>`)}
            </div></div>
            <div class="vbar"><button aria-label="Up"><svg class="tri" viewBox="0 0 8 8"><path fill="currentColor" d="M0 6h8L4 2Z"/></svg></button><span class="thumb"></span><span></span><button class="down" aria-label="Down"><svg class="tri" viewBox="0 0 8 8"><path fill="currentColor" d="M0 2h8L4 6Z"/></svg></button></div>
            <div class="hbar"><button aria-label="Left"><svg class="tri" viewBox="0 0 8 8"><path fill="currentColor" d="M6 0v8L2 4Z"/></svg></button><span class="thumb"></span><span></span><button class="right" aria-label="Right"><svg class="tri" viewBox="0 0 8 8"><path fill="currentColor" d="M2 0v8L6 4Z"/></svg></button></div>
          </div>
        </div>
      </section>`;
  }

  private scene() {
    return html`<div class="canvas"><svg viewBox="0 0 844 535" preserveAspectRatio="xMidYMid meet" role="img" aria-label="Mesh">
      <path fill="#c8c5bd" d="M167 226.500 545 226 677 240V295L542 309H201.500L201 268.500 167 268Z"/>
      <path stroke="#d8d800" stroke-width="1.500" d="M67 466V440"/><path fill="#e0e000" d="M64.500 441 67 431 69.500 441Z"/>
      <path stroke="#f00" stroke-width="1.500" d="M70 468H96"/><path fill="#f00" d="M96 465.500 104 468 96 470.500Z"/>
      <circle cx="67" cy="468" r="3" fill="#0a5f1c"/>
      <text class="axislabel" x="68" y="439">Y</text><text class="axislabel" x="69" y="469">Z</text><text class="axislabel" x="98" y="469">X</text>
      ${blocks.map((c, i) => svg`<rect x="802" y=${342 + 15 * i} width="16" height="11" fill=${c}/><path stroke="#fff" d="M${796} ${338 + 16.8 * i}L802 ${347.5 + 15 * i}"/><text class="legend" x="796" y=${341 + 17 * i} text-anchor="end">${i}</text>`)}
      <text class="legend" transform="translate(835 428) rotate(-90)" text-anchor="middle">vtkBlockColors</text>
    </svg></div>`;
  }

  render() {
    return html`
      <div class="window">
        <header class="titlebar">
          ${windowIcon}<span class="title">ParaView 5.11.2</span>
          <div class="winbuttons">
            <button aria-label="Minimize"><svg width="13" height="12"><path fill="#000" d="M2 9h9v2H2z"/></svg></button>
            <button aria-label="Maximize"><svg width="13" height="12"><path fill="none" stroke="#000" d="M.5 1.500h12v9H.5z"/><path fill="#000" d="M0 1h13v2H0z"/></svg></button>
            <button aria-label="Close"><svg width="13" height="12"><path stroke="#000" stroke-width="2" d="M2.500 2l8 8M10.500 2l-8 8"/></svg></button>
          </div>
        </header>
        <nav class="menubar"><div class="menus">${menus.map(([m, k]) => html`<button><span>${m.slice(0, k)}<u>${m[k]}</u>${m.slice(k + 1)}</span></button>`)}</div></nav>

        <div class="toolbar">
          <span class="handle"></span>
          ${this.tools(["open", "load", "save", "extract", "catalyst", "|", "connect", "disconnect", "history", "|", "undo", "redo", "|", "loadstate", "colorby"])}
          <button class="tool palette" aria-label="Palette">${icon("palette")}${caret}</button>
          <span class="gap-m"></span><span class="handle"></span>
          ${this.tools(["first", "prev", "back", "play", "next", "last", "loop"])}
          <span class="gap-m"></span><span class="handle"></span>
          <label for="time">Time:</label>
          <span class="combo w-time"><select id="time"><option>286</option></select>${caret}</span>
          <span class="spin"><input id="step" type="number" value="3" aria-label="Time step" /><span class="steps"><button aria-label="Increase"><svg viewBox="0 0 8 4"><path fill="#aaa" d="M0 4h8L4 0Z"/></svg></button><button aria-label="Decrease"><svg viewBox="0 0 8 4"><path fill="#555" d="M0 0h8L4 4Z"/></svg></button></span></span>
          <label for="step">max is 3</label>
          <span class="gap-m"></span><span class="handle"></span>
        </div>

        <div class="toolbar">
          <span class="handle"></span>
          ${this.tools(["colorbar", "editmap", "sepmap", "range", "rangec", "ranget", "rangeeye"], ["colorbar"])}
          <span class="combo w-array"><svg class="dot" viewBox="0 0 12 12"><circle cx="6" cy="6" r="6" fill="#f0b323"/><path fill="#a18f62" d="M2 2h8v8H2z"/></svg><select aria-label="Array"><option>vtkBlockColors</option></select>${caret}</span>
          <span class="combo w-comp faded"><select aria-label="Component" disabled><option></option></select>${caret}</span>
          <span class="handle"></span>
          <span class="combo w-rep"><select aria-label="Representation"><option>Surface</option></select>${caret}</span>
          <span class="gap-m"></span><span class="handle"></span>
          ${this.tools(["resetview", "zoomcenter", "zoomdata", "zoomclose", "zoombox", "px", "mx", "py", "my", "pz"])}
          <span class="spacer"></span>
          <button class="more" aria-label="More">»</button><span class="gap-s"></span><span class="handle"></span>
          ${this.tools(["axes"], ["axes"])}<button class="more" aria-label="More">»</button><span class="gap-s"></span><span class="handle"></span>
          ${this.tools(["light"], ["light"])}<span class="gap-m"></span><span class="handle"></span>
        </div>

        <div class="toolbar wide">
          <span class="handle"></span>
          ${this.tools(["calc", "contour", "clip", "slice", "threshold", "subset", "glyph", "stream", "warp", "group", "extractgroup"])}
          <span class="gap-s"></span><span class="handle"></span>
          ${this.tools(["box", "selectdata", "histogram", "plottime", "plotline", "plotsel", "probe", "programmable"])}
          <span class="gap-s"></span><span class="handle"></span>${this.tools(["ruler"])}
        </div>

        <div class="body">
          ${this.dock()}
          <div class="vsplit"><i></i></div>
          <main class="main">
            <div class="tabs"><button class="current">${windowIcon}Layout #1 ${closeBox}</button><button class="plus">+</button></div>
            <div class="frame">
              <div class="viewbar">
                ${["camundo", "camredo", "|", "capture", "|", "threed", "camzoom", "|", "add", "sub", "toggle", "|", "cells", "points", "frcells", "frpoints", "polycells", "polypoints", "blocks", "frblocks", "hover", "icells", "ipoints", "hcells", "hpoints", "grow"].map((n) => (n === "|" ? html`<span class="sep"></span>` : html`<button class="tool" aria-label=${n}>${viewIcon(n)}</button>`))}
                <button class="more" aria-label="More">»</button>
                <span class="spacer"></span>
                <a class="viewname" href="#view">RenderView1</a>
                <div class="viewbuttons">
                  <button class="push" aria-label="Split horizontal"><svg width="14" height="14"><path fill="#d3daee" stroke="#8b93a5" d="M.5.5h13v13H.5zM7 0v14"/></svg></button>
                  <button class="push" aria-label="Split vertical"><svg width="14" height="14"><path fill="#d3daee" stroke="#8b93a5" d="M.5.5h13v13H.5zM0 7h14"/></svg></button>
                  <button class="push" aria-label="Maximize">${windowIcon}</button>
                  <button class="push" aria-label="Close">${closeBox}</button>
                </div>
              </div>
              ${this.scene()}
            </div>
          </main>
        </div>

        <footer class="status">
          <button class="push cancel" aria-label="Abort" disabled><svg width="8" height="8" viewBox="0 0 8 8"><path stroke="#999" stroke-width="3" d="M1 1l6 6M7 1 1 7"/></svg></button>
          <div class="progress"></div>
          <div class="memory"><span class="used"></span>DESKTOP-PJVM1PQ: 972.4 MiB/7.7 GiB 12.3%</div>
          <span class="grip"></span>
        </footer>

        <svg class="note" viewBox="690 24 330 84" aria-hidden="true">
          <ellipse cx="814" cy="67.500" rx="116" ry="26" fill="none" stroke="#00a2e8" stroke-width="5"/>
          <path fill="#99d9ea" stroke="#00a2e8" stroke-width="5" stroke-linejoin="round" d="M900 67 954 33V49H1011V85H954V102Z"/>
        </svg>
      </div>`;
  }
}
